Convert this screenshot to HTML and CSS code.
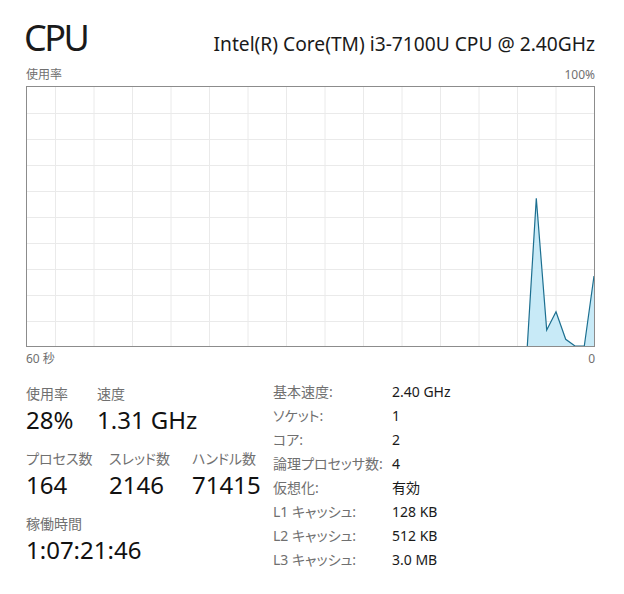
FILE: index.html
```html
<!DOCTYPE html>
<html lang="ja">
<head>
<meta charset="utf-8">
<link rel="stylesheet" href="styles.css">
</head>
<body>
<div class="page">
  <div class="header">
    <div class="title">CPU</div>
    <div class="model">Intel(R) Core(TM) i3-7100U CPU @ 2.40GHz</div>
  </div>
  <div class="axis axis-top"><span>使用率</span><span>100%</span></div>
  <div class="graph">
    <svg width="567" height="259" viewBox="0 0 567 259">
      <g class="grid">
        <line x1="28.5" y1="0" x2="28.5" y2="259"/>
        <line x1="67" y1="0" x2="67" y2="259"/>
        <line x1="105.5" y1="0" x2="105.5" y2="259"/>
        <line x1="144" y1="0" x2="144" y2="259"/>
        <line x1="182.5" y1="0" x2="182.5" y2="259"/>
        <line x1="221" y1="0" x2="221" y2="259"/>
        <line x1="259.5" y1="0" x2="259.5" y2="259"/>
        <line x1="298" y1="0" x2="298" y2="259"/>
        <line x1="336.5" y1="0" x2="336.5" y2="259"/>
        <line x1="375" y1="0" x2="375" y2="259"/>
        <line x1="413.5" y1="0" x2="413.5" y2="259"/>
        <line x1="452" y1="0" x2="452" y2="259"/>
        <line x1="490.5" y1="0" x2="490.5" y2="259"/>
        <line x1="529" y1="0" x2="529" y2="259"/>
        <line x1="0" y1="26.5" x2="567" y2="26.5"/>
        <line x1="0" y1="52.5" x2="567" y2="52.5"/>
        <line x1="0" y1="78.5" x2="567" y2="78.5"/>
        <line x1="0" y1="104.5" x2="567" y2="104.5"/>
        <line x1="0" y1="130.5" x2="567" y2="130.5"/>
        <line x1="0" y1="156.5" x2="567" y2="156.5"/>
        <line x1="0" y1="182.5" x2="567" y2="182.5"/>
        <line x1="0" y1="208.5" x2="567" y2="208.5"/>
        <line x1="0" y1="234.5" x2="567" y2="234.5"/>
      </g>
      <polygon class="area" points="500.3,259 509.3,111.3 519.7,243 529,224.7 538.7,252.3 548,259"/>
      <polygon class="area" points="557.3,259 567,189 567,259"/>
      <polyline class="line" points="500.3,259 509.3,111.3 519.7,243 529,224.7 538.7,252.3 548,259 557.3,259 567,189"/>
    </svg>
  </div>
  <div class="axis axis-bottom"><span>60 秒</span><span>0</span></div>
  <div class="stats">
    <div class="left">
      <div class="row">
        <div class="stat w70"><div class="label">使用率</div><div class="value">28%</div></div>
        <div class="stat"><div class="label">速度</div><div class="value">1.31 GHz</div></div>
      </div>
      <div class="row">
        <div class="stat w83"><div class="label">プロセス数</div><div class="value">164</div></div>
        <div class="stat w83"><div class="label">スレッド数</div><div class="value">2146</div></div>
        <div class="stat"><div class="label">ハンドル数</div><div class="value">71415</div></div>
      </div>
      <div class="row">
        <div class="stat"><div class="label">稼働時間</div><div class="value">1:07:21:46</div></div>
      </div>
    </div>
    <div class="right">
      <div class="k">基本速度:</div><div class="v">2.40 GHz</div>
      <div class="k">ソケット:</div><div class="v">1</div>
      <div class="k">コア:</div><div class="v">2</div>
      <div class="k">論理プロセッサ数:</div><div class="v">4</div>
      <div class="k">仮想化:</div><div class="v">有効</div>
      <div class="k">L1 キャッシュ:</div><div class="v">128 KB</div>
      <div class="k">L2 キャッシュ:</div><div class="v">512 KB</div>
      <div class="k">L3 キャッシュ:</div><div class="v">3.0 MB</div>
    </div>
  </div>
</div>
</body>
</html>
```

FILE: styles.css
```css
html, body {
  margin: 0;
  padding: 0;
  background: #ffffff;
}
body {
  font-family: "Noto Sans", "Noto Sans CJK JP", sans-serif;
  color: #1a1a1a;
  font-feature-settings: "palt";
}
.page {
  width: 569px;
  padding: 16px 0 0 26px;
}
.header {
  display: flex;
  justify-content: space-between;
  align-items: baseline;
  height: 51px;
}
.title {
  font-size: 36px;
  line-height: 44px;
  letter-spacing: -2.5px;
  margin-left: -2px;
}
.model {
  font-size: 19.2px;
  line-height: 26px;
}
.axis {
  display: flex;
  justify-content: space-between;
  font-size: 12px;
  line-height: 16px;
  color: #707070;
}
.axis-top {
  height: 19px;
}
.axis-bottom {
  padding-top: 4px;
  height: 20px;
}
.graph {
  width: 567px;
  height: 259px;
  border: 1px solid #8c8c8c;
}
.graph svg {
  display: block;
}
.grid line {
  stroke: #eaeaea;
  stroke-width: 1;
}
.area {
  fill: #c8eaf7;
  stroke: none;
}
.line {
  fill: none;
  stroke: #1c6f90;
  stroke-width: 1.2;
  stroke-linejoin: miter;
}
.stats {
  display: flex;
  padding-top: 13px;
}
.left {
  width: 247px;
  display: flex;
  flex-direction: column;
  gap: 13px;
}
.row {
  display: flex;
}
.stat {
  display: flex;
  flex-direction: column;
}
.w70 { width: 71px; }
.w83 { width: 83px; }
.label {
  font-size: 14px;
  line-height: 19px;
  color: #707070;
}
.value {
  font-size: 24px;
  line-height: 33px;
  color: #111111;
}
.right {
  display: grid;
  grid-template-columns: 119px auto;
  grid-auto-rows: 24px;
  font-size: 14px;
  line-height: 24px;
  margin-top: -4px;
}
.right .k {
  color: #707070;
}
.right .v {
  color: #1a1a1a;
}
```
